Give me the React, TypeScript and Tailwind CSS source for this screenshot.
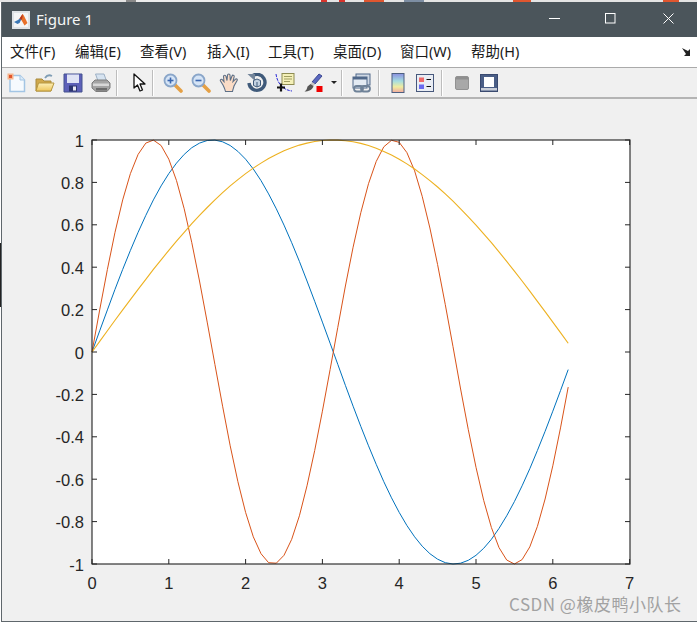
const font = { fontFamily: '"Noto Sans", "Noto Sans CJK SC", sans-serif' };

const X0 = 92, XS = 76.8, Y0 = 352, YS = 212;
function curve(f: (t: number) => number) {
  const pts: string[] = [];
  for (let i = 0; i <= 62; i++) {
    const t = i / 10;
    pts.push(`${(X0 + t * XS).toFixed(1)},${(Y0 - f(t) * YS).toFixed(1)}`);
  }
  return pts.join(" ");
}

const Sep = ({ ml }: { ml: string }) => <div className={`w-[2px] h-[26px] bg-[#bdbdbd] border-r border-white ${ml}`} />;

const New = () => (
  <svg width="20" height="20" viewBox="0 0 20 20">
    <path d="M3 2.500h10l4.500 4.500v11.500H3z" fill="#f6fafe" stroke="#a3c5e4" strokeWidth="1.500" />
    <path d="M13 2.500V7h4.500" fill="#dcebf8" stroke="#a3c5e4" />
    <rect x="0.500" y="0.500" width="6" height="6" fill="#f6b48c" />
    <rect x="2" y="2" width="3" height="3" fill="#e2552b" />
  </svg>
);
const Open = () => (
  <svg width="20" height="20" viewBox="0 0 20 20">
    <defs>
      <linearGradient id="fo" x1="0" y1="0" x2="0" y2="1">
        <stop offset="0" stopColor="#fdf0b8" />
        <stop offset="1" stopColor="#eec65c" />
      </linearGradient>
    </defs>
    <path d="M10 5c2-3 5-3 7-2" fill="none" stroke="#7f9db5" strokeWidth="1.800" />
    <path d="M1 6h6l2 2h7v10H1z" fill="#cfa84c" stroke="#a98a3c" />
    <path d="M1 18l2.500-8H19l-3 8z" fill="url(#fo)" stroke="#b6963f" />
  </svg>
);
const Save = () => (
  <svg width="20" height="20" viewBox="0 0 20 20">
    <path d="M1 1h18v18H1z" fill="#5d60b8" stroke="#44528f" />
    <rect x="4" y="1.500" width="12" height="8.500" fill="#dfe3f5" />
    <rect x="6" y="12.500" width="8" height="6" fill="#2c3470" />
    <rect x="10" y="13.500" width="3" height="4" fill="#e8e8f4" />
  </svg>
);
const Print = () => (
  <svg width="20" height="20" viewBox="0 0 20 20">
    <path d="M4.500 1h8.500l2.500 7H7z" fill="#d6e3f0" stroke="#9db0c4" />
    <path d="M1 10l3-3h12l3 3v5l-3 3.500H5L1 15z" fill="#a4a4a4" stroke="#7c7c7c" />
    <path d="M2 10.500h16v2.500H2z" fill="#d8d8d8" />
    <path d="M5 15h11v2.500H5z" fill="#6c6c6c" />
  </svg>
);
const Arrow = () => (
  <svg width="13" height="20" viewBox="0 0 13 20">
    <path d="M1 1v14l3.500-3 2.500 6 2.500-1-2.500-6h5z" fill="#fff" stroke="#111" strokeWidth="1.300" strokeLinejoin="round" />
  </svg>
);
const Zoom = ({ plus }: { plus?: boolean }) => (
  <svg width="20" height="20" viewBox="0 0 20 20">
    <path d="M12 12l6 6" stroke="#e5a045" strokeWidth="3.600" strokeLinecap="round" />
    <circle cx="7.500" cy="7.500" r="6" fill="#d5e4f6" stroke="#8aa6c9" strokeWidth="1.800" />
    <path d="M4.500 7.500h6" stroke="#3a66b0" strokeWidth="1.600" />
    {plus && <path d="M7.500 4.500v6" stroke="#3a66b0" strokeWidth="1.600" />}
  </svg>
);
const Hand = () => (
  <svg width="20" height="20" viewBox="0 0 20 20">
    <path d="M4 12L1.500 8c-.8-1.500 1-2.300 2-1.200L5 8.500 4.500 3.500c0-1.600 2.200-1.600 2.500 0L8 7.500 8.500 2c.2-1.400 2.400-1.400 2.500 0L11.300 7.500 13 3c.4-1.300 2.300-1 2.200.4L14 8.500l2.300-2.200c1-1 2.600 0 1.800 1.200L15 13c-.5 2-1 3-1.500 5.500h-7C6 16 5 14 4 12z" fill="#fbdcc6" stroke="#5d6f86" strokeWidth="1.100" />
  </svg>
);
const Rotate = () => (
  <svg width="20" height="20" viewBox="0 0 20 20">
    <path d="M4.500 3.500A8 8 0 1 1 2 10" fill="none" stroke="#3f5a7a" strokeWidth="3.400" />
    <path d="M0.500 1h7.500v7z" fill="#73859a" />
    <path d="M6.500 7.500l3.500-1.500 3.500 1.500v5L10 14l-3.500-1.500z" fill="#c3d2e2" stroke="#3f5a7a" />
    <path d="M10 9v5" stroke="#3f5a7a" />
  </svg>
);
const Cursor = () => (
  <svg width="20" height="20" viewBox="0 0 20 20">
    <path d="M1 1c1 8 6 16 16 17" fill="none" stroke="#2b2bd8" strokeWidth="1" strokeDasharray="3 1" />
    <rect x="7" y="0.500" width="12" height="11" fill="#f4f0b8" stroke="#8e8c52" />
    <path d="M9 3.500h8M9 6h8M9 8.500h6" stroke="#a09e62" />
    <path d="M6 10.500v8M2 14.500h8" stroke="#111" strokeWidth="2.200" />
  </svg>
);
const Brush = () => (
  <svg width="20" height="20" viewBox="0 0 20 20">
    <path d="M9 9l7-8 3 2-7 8z" fill="#5a68c0" stroke="#3b4790" />
    <path d="M9 9l3 2-1.500 2-3-2z" fill="#c8c8c8" />
    <path d="M7.500 11l3 2c-1 4-5 5.500-9 5.500 2-1 2.500-3 3-5z" fill="#555" />
    <rect x="13.500" y="13" width="6" height="6" fill="#f00000" />
  </svg>
);
const Link = () => (
  <svg width="19" height="20" viewBox="0 0 19 20">
    <rect x="4" y="1" width="14" height="11" fill="#cfd8e4" stroke="#50688a" />
    <rect x="1" y="4" width="14" height="11" fill="#e4ebf3" stroke="#50688a" />
    <rect x="1" y="4" width="14" height="2.500" fill="#50688a" />
    <rect x="2" y="13" width="9" height="5.500" rx="2.700" fill="none" stroke="#6f8298" strokeWidth="1.800" />
    <rect x="9" y="13" width="9" height="5.500" rx="2.700" fill="none" stroke="#6f8298" strokeWidth="1.800" />
  </svg>
);
const Colorbar = () => (
  <svg width="14" height="20" viewBox="0 0 14 20">
    <defs>
      <linearGradient id="cb" x1="0" y1="0" x2="0" y2="1">
        <stop offset="0" stopColor="#8a8fe0" />
        <stop offset="0.4" stopColor="#a5dde0" />
        <stop offset="0.7" stopColor="#f0eda0" />
        <stop offset="1" stopColor="#f0a8a0" />
      </linearGradient>
    </defs>
    <rect x="1" y="0.500" width="12" height="19" fill="url(#cb)" stroke="#4d5f80" />
  </svg>
);
const Legend = () => (
  <svg width="18" height="18" viewBox="0 0 18 18">
    <rect x="0.500" y="0.500" width="17" height="17" fill="#e9edf4" stroke="#47587c" />
    <rect x="3" y="3.500" width="5" height="4.500" fill="#ef6a6a" />
    <rect x="3" y="10.500" width="5" height="4.500" fill="#6a6aef" />
    <path d="M10.500 5.500h4.500M10.500 12.500h4.500" stroke="#111" strokeWidth="1.200" />
  </svg>
);
const Gray = () => (
  <svg width="14" height="14" viewBox="0 0 14 14">
    <rect x="0.500" y="0.500" width="13" height="13" rx="1.500" fill="#a8a8a8" stroke="#929292" />
    <rect x="1" y="1" width="12" height="2.500" fill="#8f8f8f" />
  </svg>
);
const Panel = () => (
  <svg width="18" height="18" viewBox="0 0 18 18">
    <rect x="0.500" y="0.500" width="17" height="17" fill="#4a5e86" stroke="#3a4a70" />
    <rect x="4" y="3" width="10" height="10" fill="#fff" />
    <rect x="1" y="14" width="16" height="2.500" fill="#c9ced8" />
  </svg>
);
const Matlab = () => (
  <svg width="18" height="18" viewBox="0 0 18 18">
    <rect width="18" height="18" fill="#dfe3e7" />
    <rect x="2" y="2" width="14" height="14" fill="#f4f5f6" />
    <path d="M2 11l4-2 2.500-2 2-1-3 6-2 1z" fill="#3b77b5" />
    <path d="M8 7l2.500-4c1.500 1 3 5 5 9l-3 2.500C11 12 9.500 9 8 7z" fill="#e8702a" />
    <path d="M10.500 3c-1 2-2 3-3.500 5 1-.5 2 0 2.500 1 1-2 1.300-3 1-6z" fill="#b8371c" />
  </svg>
);

const strip = [
  ["w-[126px]", "bg-[#e4e4e4]"],
  ["w-[10px]", "bg-[#8a8a8a]"],
  ["w-[185px]", "bg-[#ececec]"],
  ["w-[6px]", "bg-[#d8342c]"],
  ["w-[12px]", "bg-[#e4e4e4]"],
  ["w-[6px]", "bg-[#d8342c]"],
  ["w-[19px]", "bg-[#e4e4e4]"],
  ["w-[20px]", "bg-[#e0562f]"],
  ["w-[20px]", "bg-[#e4e4e4]"],
  ["w-[20px]", "bg-[#7d8ea3]"],
  ["w-[89px]", "bg-[#e4e4e4]"],
  ["w-[18px]", "bg-[#e0562f]"],
  ["w-[132px]", "bg-[#e4e4e4]"],
  ["w-[16px]", "bg-[#e0562f]"],
  ["w-[18px]", "bg-[#e4e4e4]"],
];
const menus = [
  ["文件(F)", "w-[65px]"],
  ["编辑(E)", "w-[65px]"],
  ["查看(V)", "w-[67px]"],
  ["插入(I)", "w-[61px]"],
  ["工具(T)", "w-[65px]"],
  ["桌面(D)", "w-[67px]"],
  ["窗口(W)", "w-[71px]"],
  ["帮助(H)", "w-[70px]"],
];

export default function App() {
  const xt = [0, 1, 2, 3, 4, 5, 6, 7];
  const yt = [1, 0.8, 0.6, 0.4, 0.2, 0, -0.2, -0.4, -0.6, -0.8, -1];
  return (
    <div className="w-[697px] h-[623px] bg-white flex flex-col overflow-hidden relative" style={font}>
      <div className="h-[2px] flex shrink-0">
        {strip.map(([w, c], i) => (
          <div key={i} className={`${w} ${c}`} />
        ))}
      </div>
      <div className="absolute left-0 top-[243px] w-[1px] h-[64px] bg-[#222222]" />
      <div className="flex-1 flex flex-col ml-[1px] mb-[1px] border-l border-b border-[#5f676c] min-h-0">
        <div className="h-[35px] bg-[#4b555b] flex items-center shrink-0 relative">
          <div className="ml-[10px] mr-[6px] flex"><Matlab /></div>
          <span className="text-[15px] text-[#f4f5f5]">Figure 1</span>
          <svg width="134" height="14" viewBox="0 0 134 14" className="absolute left-[545px] top-[10px]" fill="none" stroke="#fff">
            <path d="M2 6.500h11" />
            <rect x="58.500" y="1.500" width="9.500" height="9.500" />
            <path d="M116.500 1.500l10 10M126.500 1.500l-10 10" />
          </svg>
        </div>
        <div className="h-[30px] bg-white flex items-center pl-[8px] text-[14.5px] text-[#1a1a1a] shrink-0 relative">
          {menus.map(([m, w]) => (
            <span key={m} className={`${w} whitespace-nowrap`}>{m}</span>
          ))}
          <svg width="10" height="8" viewBox="0 0 10 8" className="absolute left-[680px] top-[11px]">
            <path d="M0 0l6 3 2-2v7H2l2-2z" fill="#222" />
          </svg>
        </div>
        <div className="h-[32px] bg-[#f0f0f0] border-t border-b-2 border-t-[#aaaaaa] border-b-[#b4b4b4] flex items-center pl-[5px] shrink-0">
          <New />
          <div className="ml-[8px] flex"><Open /></div>
          <div className="ml-[8px] flex"><Save /></div>
          <div className="ml-[8px] flex"><Print /></div>
          <Sep ml="ml-[5px]" />
          <div className="ml-[15px] flex"><Arrow /></div>
          <Sep ml="ml-[6px]" />
          <div className="ml-[9px] flex"><Zoom plus /></div>
          <div className="ml-[8px] flex"><Zoom /></div>
          <div className="ml-[8px] flex"><Hand /></div>
          <div className="ml-[8px] flex"><Rotate /></div>
          <div className="ml-[8px] flex"><Cursor /></div>
          <div className="ml-[8px] flex"><Brush /></div>
          <div className="ml-[8px] w-0 h-0 border-x-[3.500px] border-x-transparent border-t-[3.500px] border-t-[#222]" />
          <Sep ml="ml-[4px]" />
          <div className="ml-[9px] flex"><Link /></div>
          <Sep ml="ml-[7px]" />
          <div className="ml-[11px] flex"><Colorbar /></div>
          <div className="ml-[11px] flex"><Legend /></div>
          <Sep ml="ml-[7px]" />
          <div className="ml-[12px] flex"><Gray /></div>
          <div className="ml-[11px] flex"><Panel /></div>
        </div>
        <div className="flex-1 bg-[#f0f0f0] relative min-h-0">
          <svg width="697" height="623" viewBox="0 0 697 623" className="absolute left-[-2px] top-[-99px]">
            <rect x="92" y="140" width="538" height="424" fill="#fff" />
            <polyline points={curve(Math.sin)} fill="none" stroke="#0072bd" strokeWidth="1" />
            <polyline points={curve((t) => Math.sin(2 * t))} fill="none" stroke="#d95319" strokeWidth="1" />
            <polyline points={curve((t) => Math.sin(t / 2))} fill="none" stroke="#edb120" strokeWidth="1.100" />
            <rect x="92" y="140" width="538" height="424" fill="none" stroke="#1f1f1f" strokeWidth="1.100" />
            {xt.map((t) => {
              const x = X0 + t * XS;
              return (
                <g key={t}>
                  <path d={`M${x} 564v-5M${x} 140v5`} stroke="#262626" />
                  <text x={x} y="589" textAnchor="middle" fontSize="16.500" fill="#262626" fontFamily="Liberation Sans">{t}</text>
                </g>
              );
            })}
            {yt.map((v) => {
              const y = Y0 - v * YS;
              return (
                <g key={v}>
                  <path d={`M92 ${y}h5M630 ${y}h-5`} stroke="#262626" />
                  <text x="84" y={y + 6.5} textAnchor="end" fontSize="16.500" fill="#262626" fontFamily="Liberation Sans">{v}</text>
                </g>
              );
            })}
            <text x="509" y="611" fontSize="17" letterSpacing="0.500" fill="#a2a2a2" fontFamily='"Noto Sans CJK SC", sans-serif'>CSDN @橡皮鸭小队长</text>
          </svg>
        </div>
      </div>
    </div>
  );
}
